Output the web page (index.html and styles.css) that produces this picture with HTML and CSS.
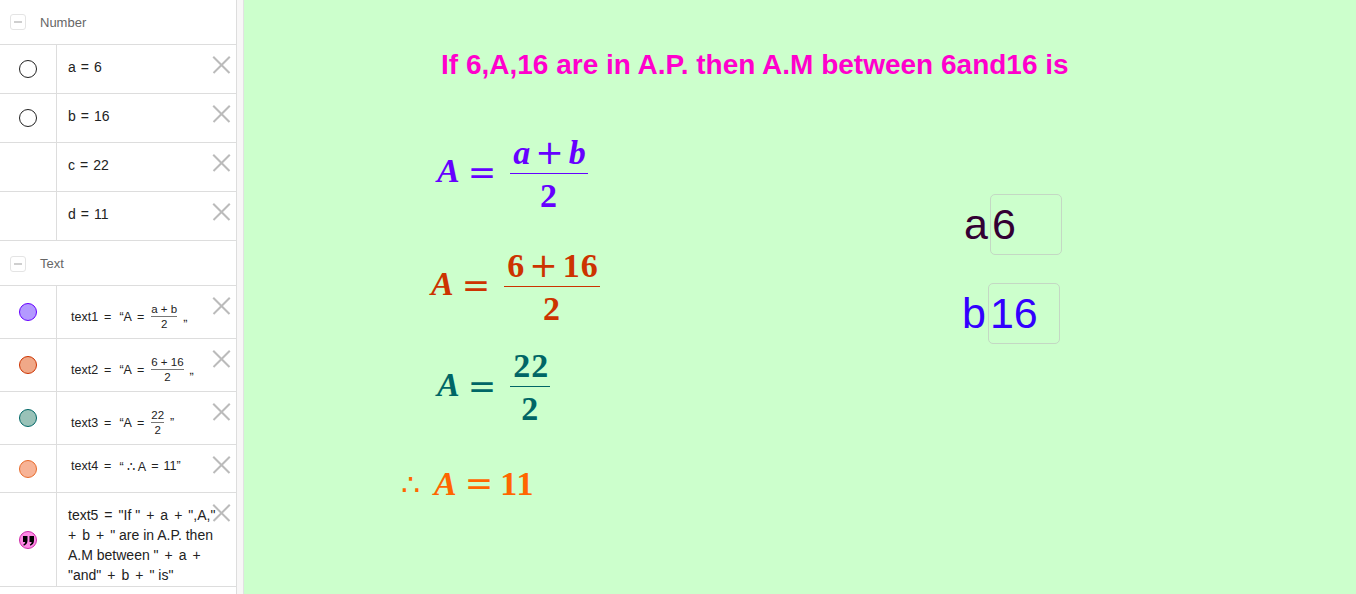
FILE: index.html
```html
<!DOCTYPE html>
<html lang="en">
<head>
    <meta charset="UTF-8">
    <title>Arithmetic Mean</title>
    <link rel="stylesheet" href="styles.css">
</head>
<body>
    <div class="algebra">
        <div class="group-head">
            <span class="toggle"></span>
            <span class="group-name">Number</span>
        </div>
        <div class="row">
            <div class="marble"><span class="dot"></span></div>
            <div class="content">a<span class="eq">=</span>6</div>
            <span class="close"></span>
        </div>
        <div class="row">
            <div class="marble"><span class="dot"></span></div>
            <div class="content">b<span class="eq">=</span>16</div>
            <span class="close"></span>
        </div>
        <div class="row">
            <div class="marble"></div>
            <div class="content">c<span class="eq">=</span>22</div>
            <span class="close"></span>
        </div>
        <div class="row">
            <div class="marble"></div>
            <div class="content">d<span class="eq">=</span>11</div>
            <span class="close"></span>
        </div>
        <div class="group-head text-head">
            <span class="toggle"></span>
            <span class="group-name">Text</span>
        </div>
        <div class="row tall">
            <div class="marble"><span class="dot purple"></span></div>
            <div class="content small">text1<span class="eq wide-eq">=</span>&ldquo;A<span class="eq">=</span><span class="mini-frac"><span>a + b</span><span class="mini-den">2</span></span>&bdquo;</div>
            <span class="close"></span>
        </div>
        <div class="row tall">
            <div class="marble"><span class="dot red"></span></div>
            <div class="content small">text2<span class="eq wide-eq">=</span>&ldquo;A<span class="eq">=</span><span class="mini-frac"><span>6 + 16</span><span class="mini-den">2</span></span>&bdquo;</div>
            <span class="close"></span>
        </div>
        <div class="row tall">
            <div class="marble"><span class="dot teal"></span></div>
            <div class="content small">text3<span class="eq wide-eq">=</span>&ldquo;A<span class="eq">=</span><span class="mini-frac"><span>22</span><span class="mini-den">2</span></span>&rdquo;</div>
            <span class="close"></span>
        </div>
        <div class="row short">
            <div class="marble"><span class="dot orange"></span></div>
            <div class="content small plain">text4<span class="eq wide-eq">=</span>&ldquo; &there4; A<span class="eq">=</span>11&rdquo;</div>
            <span class="close"></span>
        </div>
        <div class="row wide">
            <div class="marble">
                <span class="dot pink">
                    <svg width="12" height="10" viewBox="0 0 12 10">
                        <path d="M0 0h4.5v4.5c0 2.5-1.2 4.3-3.6 5.2l-.6-1.1c1.2-.6 1.8-1.5 1.9-2.6H0z"/>
                        <path d="M6.5 0H11v4.5c0 2.5-1.2 4.3-3.6 5.2l-.6-1.1c1.2-.6 1.8-1.5 1.9-2.6H6.5z"/>
                    </svg>
                </span>
            </div>
            <div class="content para">text5<span class="eq">=</span>"If "<span class="eq">+</span>a<span class="eq">+</span>",A,"<br><span class="eq first">+</span>b<span class="eq">+</span>" are in A.P. then<br>A.M between "<span class="eq">+</span>a<span class="eq">+</span><br>"and"<span class="eq">+</span>b<span class="eq">+</span>" is"</div>
            <span class="close"></span>
        </div>
    </div>
    <div class="splitter"></div>
    <div class="graphics">
        <div class="title">If 6,A,16 are in A.P. then A.M between 6and16 is</div>

        <div class="formula f1">
            <i>A</i><span class="rel">=</span>
            <span class="frac"><span class="num"><i>a</i><span class="op">+</span><i>b</i></span><span class="den">2</span></span>
        </div>
        <div class="formula f2">
            <i>A</i><span class="rel">=</span>
            <span class="frac"><span class="num">6<span class="op">+</span>16</span><span class="den">2</span></span>
        </div>
        <div class="formula f3">
            <i>A</i><span class="rel">=</span>
            <span class="frac"><span class="num">22</span><span class="den">2</span></span>
        </div>
        <div class="formula f4">
            <span class="therefore">&there4;</span><i>A</i><span class="rel">=</span><span class="digits">11</span>
        </div>

        <div class="field fa">
            <span class="field-label">a</span>
            <span class="field-box">6</span>
        </div>
        <div class="field fb">
            <span class="field-label">b</span>
            <span class="field-box">16</span>
        </div>
    </div>
</body>
</html>
```

FILE: styles.css
```css
body {
    margin: 0;
    display: flex;
    height: 594px;
    overflow: hidden;
    font-family: "Liberation Sans", Arial, sans-serif;
}
.algebra {
    width: 236px;
    border-right: 1px solid #dddddd;
    background: #ffffff;
    flex-shrink: 0;
}
.splitter {
    width: 6px;
    background: #f8f7f7;
    border-right: 1px solid #e2e2e2;
    flex-shrink: 0;
}
.graphics {
    flex: 1;
    background: #ccffcc;
    position: relative;
}
.group-head {
    height: 44px;
    border-bottom: 1px solid #dddddd;
    display: flex;
    align-items: center;
}
.text-head {
    height: 43px;
    padding-top: 1px;
}
.toggle {
    width: 14px;
    height: 14px;
    margin-left: 10px;
    border: 1px solid #e4e4e4;
    border-radius: 3px;
    position: relative;
}
.toggle::after {
    content: "";
    position: absolute;
    left: 3px;
    right: 3px;
    top: 6px;
    height: 2px;
    background: #cfcfcf;
}
.group-name {
    margin-left: 14px;
    font-size: 13px;
    color: #666666;
}
.row {
    display: flex;
    height: 48px;
    border-bottom: 1px solid #dddddd;
    position: relative;
}
.row.tall {
    height: 52px;
}
.row.short {
    height: 47px;
}
.row.wide {
    height: 93px;
}
.marble {
    width: 56px;
    border-right: 1px solid #dddddd;
    display: flex;
    align-items: center;
    justify-content: center;
    flex-shrink: 0;
}
.dot {
    width: 18px;
    height: 18px;
    border: 1px solid #222222;
    border-radius: 50%;
    box-sizing: border-box;
    display: flex;
    align-items: center;
    justify-content: center;
}
.dot.purple {
    background: #b399ff;
    border-color: #6600ff;
}
.dot.red {
    background: #f0a888;
    border-color: #cc3300;
}
.dot.teal {
    background: #99c2b8;
    border-color: #006666;
}
.dot.orange {
    background: #f7b396;
    border-color: #e86a2a;
}
.dot.pink {
    background: #ff88e6;
    border-color: #cc2ca8;
    padding: 3px 0 0 2px;
}
.content {
    display: flex;
    align-items: center;
    padding-left: 11px;
    padding-bottom: 4px;
    font-size: 14px;
    color: #222222;
    white-space: pre;
}
.eq {
    margin: 0 5px;
}
.content.small {
    font-size: 12.5px;
    padding-left: 14px;
    padding-top: 10px;
    padding-bottom: 0;
}
.content.small.plain {
    padding-top: 0;
    padding-bottom: 5px;
}
.wide-eq {
    margin: 0 8px 0 6px;
}
.mini-frac {
    display: inline-flex;
    flex-direction: column;
    align-items: center;
    margin: 0 6px 0 2px;
    font-size: 11.5px;
    line-height: 13px;
}
.mini-den {
    border-top: 1px solid #777777;
    padding: 1px 2px 0;
    align-self: stretch;
    text-align: center;
}
.content.para {
    white-space: pre;
    display: block;
    padding: 12px 0 0 11px;
    font-size: 14px;
    line-height: 20px;
}
.content.para .eq {
    margin: 0 6px;
}
.content.para .eq.first {
    margin-left: 0;
}
.close {
    position: absolute;
    right: 6px;
    top: 11px;
    width: 17px;
    height: 17px;
}
.close::before,
.close::after {
    content: "";
    position: absolute;
    left: -3px;
    top: 8px;
    width: 23px;
    height: 1.6px;
    background: #bbbbbb;
    transform: rotate(45deg);
}
.close::after {
    transform: rotate(-45deg);
}
.title {
    position: absolute;
    left: 197px;
    top: 51px;
    font-size: 28px;
    line-height: 1;
    font-weight: bold;
    color: #ff00cc;
    white-space: nowrap;
}
.formula {
    position: absolute;
    display: flex;
    align-items: center;
    font-family: "Liberation Serif", "Times New Roman", serif;
    font-weight: bold;
    font-size: 34px;
    line-height: 1;
    white-space: nowrap;
}
.formula i {
    position: relative;
    top: -3px;
}
.frac i {
    top: 0;
}
.rel,
.op {
    font-family: "DejaVu Sans", sans-serif;
    font-weight: normal;
}
.rel {
    margin: 0 7px 0 8px;
    position: relative;
    top: -2px;
}
.op {
    margin: 0 4px;
}
.num,
.den,
.digits {
    letter-spacing: 1px;
}
.frac {
    display: inline-flex;
    flex-direction: column;
    align-items: center;
    margin-left: 7px;
}
.num {
    padding: 0 1px 3px 3px;
}
.den {
    align-self: stretch;
    text-align: center;
    border-top: 1.5px solid currentColor;
    padding-top: 5px;
}
.f1 {
    left: 193px;
    top: 135px;
    color: #6600ff;
}
.f2 {
    left: 187px;
    top: 248px;
    color: #cc3300;
}
.f3 {
    left: 193px;
    top: 349px;
    color: #006666;
}
.f4 {
    left: 157px;
    top: 466px;
    color: #ff6600;
    align-items: baseline;
}
.f4 i {
    top: 0;
}
.f4 .rel {
    top: 0;
}
.therefore {
    font-family: "DejaVu Sans", sans-serif;
    font-size: 30px;
    font-weight: normal;
    margin-right: 14px;
}
.field {
    position: absolute;
    display: flex;
    align-items: center;
    font-size: 43px;
    line-height: 1;
}
.field-label {
    margin-right: 2px;
}
.field-box {
    width: 69px;
    height: 59px;
    border: 1px solid #c4d8c4;
    border-radius: 5px;
    display: flex;
    align-items: center;
    padding-left: 1px;
    box-sizing: content-box;
}
.fa {
    left: 720px;
    top: 194px;
    color: #330033;
}
.fb {
    left: 718px;
    top: 283px;
    color: #3300ff;
}
```
